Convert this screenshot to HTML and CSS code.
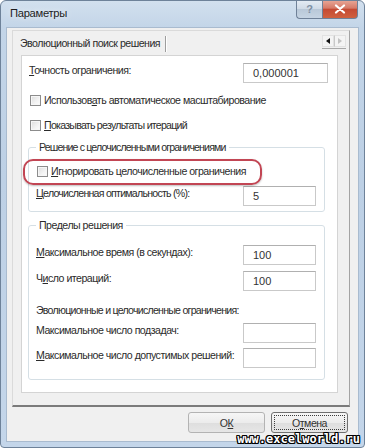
FILE: index.html
```html
<!DOCTYPE html>
<html lang="ru">
<head>
<meta charset="utf-8">
<title>Параметры</title>
<link rel="stylesheet" href="styles.css">
</head>
<body>
<div class="window">
  <div class="titlebar">
    <span class="title">Параметры</span>
    <div class="caption-btns">
      <div class="cap-btn help">?</div>
      <div class="cap-btn close">
        <svg width="12" height="10" viewBox="0 0 12 10"><path d="M2 1.5 L10 8.5 M10 1.5 L2 8.5" stroke="#fff" stroke-width="2.2" stroke-linecap="round"/></svg>
      </div>
    </div>
  </div>
  <div class="client">
    <div class="tabctrl">
      <div class="tabstrip">
        <div class="tab">Эволюционный поиск решения</div>
        <div class="tab-sep"></div>
        <div class="tab-fill"></div>
        <div class="arrows">
          <span class="arr"><span class="tri-left"></span></span>
          <span class="arr"><span class="tri-right"></span></span>
        </div>
      </div>
      <div class="tabpage">
        <div class="panel">
          <div class="field top-field">
            <span class="label"><u>Т</u>очность ограничения:</span>
            <div class="input wide">0,000001</div>
          </div>
          <div class="check-row cb1"><span class="checkbox"></span><span class="label">Использов<u>а</u>ть автоматическое масштабирование</span></div>
          <div class="check-row cb2"><span class="checkbox"></span><span class="label tight"><u>П</u>оказывать результаты итераций</span></div>

          <fieldset class="group g1">
            <legend class="tighter">Решение с целочисленными ограничениями</legend>
            <div class="check-row in-group highlight"><span class="checkbox"></span><span class="label"><u>И</u>гнорировать целочисленные ограничения</span></div>
            <div class="field f-opt">
              <span class="label tight"><u>Ц</u>елочисленная оптимальность (%):</span>
              <div class="input">5</div>
            </div>
          </fieldset>

          <fieldset class="group g2">
            <legend>Пределы решения</legend>
            <div class="field f-time">
              <span class="label"><u>М</u>аксимальное время (в секундах):</span>
              <div class="input">100</div>
            </div>
            <div class="field f-iter">
              <span class="label">Ч<u>и</u>сло итераций:</span>
              <div class="input">100</div>
            </div>
            <div class="note tight">Эволюционные и целочисленные ограничения:</div>
            <div class="field f-sub">
              <span class="label">Максимальное число подзадач:</span>
              <div class="input"></div>
            </div>
            <div class="field f-sol">
              <span class="label"><u>М</u>аксимальное число допустимых решений:</span>
              <div class="input"></div>
            </div>
          </fieldset>
        </div>
      </div>
    </div>
    <div class="buttons">
      <div class="btn">О<u>К</u></div>
      <div class="btn default"><span class="focus">О<u>т</u>мена</span></div>
    </div>
  </div>
  <div class="watermark">www.excelworld.ru</div>
</div>
</body>
</html>
```

FILE: styles.css
```css
* { box-sizing: border-box; }

html, body {
  margin: 0;
  padding: 0;
  background: #fff;
}

body {
  font-family: "Liberation Sans", Arial, sans-serif;
  font-size: 10.6px;
  letter-spacing: -0.5px;
  color: #2b2b2b;
}

u {
  text-decoration: underline;
  text-underline-offset: 1px;
}

.tight { letter-spacing: -0.75px; }
.tighter { letter-spacing: -0.85px; }

.window {
  position: relative;
  width: 365px;
  height: 448px;
  border: 1px solid #6e8299;
  border-radius: 6px 6px 4px 4px;
  background: linear-gradient(180deg, #d2e0ee 0%, #c3d5e8 6%, #bdd0e5 40%, #c4d6ea 100%);
  padding: 0 6px 6px 6px;
  display: flex;
  flex-direction: column;
  overflow: hidden;
}

.titlebar {
  height: 27px;
  flex: none;
  display: flex;
  align-items: flex-start;
  justify-content: space-between;
}

.title {
  margin-top: 6px;
  margin-left: 3px;
  font-size: 11.2px;
  letter-spacing: -0.3px;
  color: #1c1c1c;
  text-shadow: 0 0 6px rgba(255,255,255,0.9);
}

.caption-btns {
  display: flex;
  margin-top: -1px;
}

.cap-btn {
  height: 19px;
  display: flex;
  align-items: center;
  justify-content: center;
  border: 1px solid #6f8198;
  border-top: none;
}

.help {
  width: 26px;
  border-radius: 0 0 0 4px;
  border-right: none;
  background: linear-gradient(180deg, #e6edf5 0%, #cfdae6 50%, #b9c8d8 52%, #c6d4e3 100%);
  color: #7e8fa3;
  font-size: 11px;
  font-weight: bold;
  letter-spacing: 0;
}

.close {
  width: 36px;
  border-radius: 0 0 4px 0;
  background: linear-gradient(180deg, #e9a999 0%, #d67a68 45%, #c54a33 52%, #d0613f 100%);
}

.client {
  flex: 1;
  background: #f0f0f0;
  padding: 2px 8px 0 5px;
  display: flex;
  flex-direction: column;
  box-shadow: 0 0 0 1px #a9bbcf;
}

.tabctrl {
  height: 377px;
  flex: none;
  border-top: 1px solid #dadada;
  border-left: 1px solid #dadada;
  border-right: 1px solid #a3a3a3;
  border-bottom: 2px solid #7b7b7b;
  display: flex;
  flex-direction: column;
}

.tabstrip {
  height: 23px;
  flex: none;
  display: flex;
  align-items: center;
}

.tab {
  padding-left: 7px;
  padding-right: 5px;
  margin-top: 1px;
}

.tab-sep {
  width: 2px;
  height: 16px;
  border-left: 1px solid #9d9d9d;
  border-right: 1px solid #ffffff;
  margin-top: 2px;
}

.tab-fill {
  flex: 1;
}

.arrows {
  display: flex;
  align-self: flex-start;
  margin-top: 4px;
  margin-right: 3px;
  border-bottom: 1px solid #a8a8a8;
  padding-bottom: 1px;
}

.arr {
  width: 12px;
  height: 12px;
  display: flex;
  align-items: center;
  justify-content: center;
  background: #f4f4f4;
  border: 1px solid #e2e2e2;
}

.arr + .arr {
  border-left: 1px solid #c9c9c9;
}

.tri-left {
  width: 0;
  height: 0;
  border-top: 3px solid transparent;
  border-bottom: 3px solid transparent;
  border-right: 4px solid #111;
}

.tri-right {
  width: 0;
  height: 0;
  border-top: 3px solid transparent;
  border-bottom: 3px solid transparent;
  border-left: 4px solid #c2c2c2;
}

.tabpage {
  flex: 1;
  padding: 1px 11px 12px 8px;
}

.panel {
  height: 338px;
  background: #fff;
  border: 1px solid #d4d4d4;
  display: flex;
  flex-direction: column;
}

.label {
  line-height: 14px;
  white-space: nowrap;
}

.field {
  display: flex;
  align-items: flex-start;
  justify-content: space-between;
}

.input {
  width: 73px;
  height: 20px;
  flex: none;
  border: 1px solid #c9c9c9;
  border-top-color: #b0b0b0;
  background: #fff;
  padding-left: 9px;
  line-height: 18px;
  font-size: 11px;
  color: #333;
  letter-spacing: 0;
}

.input.wide {
  width: 85px;
}

.top-field {
  margin-top: 7px;
  padding: 0 9px 0 7px;
}

.check-row {
  display: flex;
  align-items: center;
  height: 14px;
  padding-left: 8px;
}

.checkbox {
  width: 11px;
  height: 11px;
  flex: none;
  border: 1px solid #8c8c8c;
  background: linear-gradient(135deg, #dcdcdc 0%, #f3f3f3 60%, #fdfdfd 100%);
  box-shadow: inset 0 0 0 1px #f6f6f6;
  margin-right: 3px;
}

.cb1 { margin-top: 10px; }
.cb2 { margin-top: 11px; }

.group {
  margin: 0 12px 0 6px;
  padding: 0 8px 0 7px;
  border: 1px solid #d5dfe5;
  border-radius: 3px;
  min-width: 0;
}

.group legend {
  padding: 0 3px;
  line-height: 14px;
}

.g1 {
  margin-top: 8px;
  padding-bottom: 5px;
}

.g2 {
  margin-top: 6px;
  padding-bottom: 11px;
}

.check-row.in-group {
  padding-left: 1px;
  margin-top: 10px;
  position: relative;
}

.highlight::after {
  content: "";
  position: absolute;
  left: -13px;
  top: -5px;
  width: 235px;
  height: 22px;
  border: 2px solid #c24654;
  border-radius: 10px;
  box-shadow: 0 1px 2px rgba(0,0,0,0.25);
}

.f-opt { margin-top: 8px; }
.f-time { margin-top: 13px; }
.f-iter { margin-top: 6px; }
.note { margin-top: 12px; line-height: 14px; }
.f-sub { margin-top: 6px; }
.f-sol { margin-top: 5px; }

.buttons {
  margin-top: 5px;
  display: flex;
  justify-content: flex-end;
  gap: 6px;
  padding-right: 2px;
}

.btn {
  width: 77px;
  height: 21px;
  border: 1px solid #b3b3b3;
  border-radius: 3px;
  background: linear-gradient(180deg, #f6f6f6 0%, #ececec 50%, #dedede 52%, #e6e6e6 100%);
  display: flex;
  align-items: center;
  justify-content: center;
  color: #333;
}

.btn.default {
  border-color: #6f6f6f;
  padding: 2px;
}

.btn .focus {
  width: 100%;
  height: 100%;
  border: 1px dotted #3c3c3c;
  display: flex;
  align-items: center;
  justify-content: center;
}

.watermark {
  position: absolute;
  right: 4px;
  bottom: 1px;
  font-family: "DejaVu Sans Mono", monospace;
  font-weight: bold;
  font-size: 12px;
  letter-spacing: 0;
  color: #fff;
  line-height: 13px;
  text-shadow:
    1px 0 0 #000, -1px 0 0 #000, 0 1px 0 #000, 0 -1px 0 #000,
    1px 1px 0 #000, -1px -1px 0 #000, 1px -1px 0 #000, -1px 1px 0 #000;
}
```
